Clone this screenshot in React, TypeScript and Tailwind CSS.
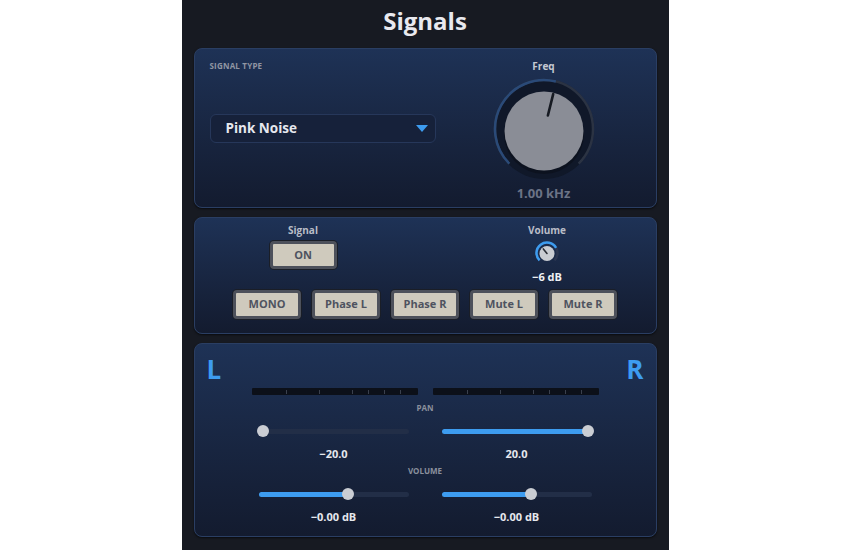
import React from "react";

const FONT = { fontFamily: '"Open Sans", "DejaVu Sans", sans-serif' };

// point on a circle, angle in degrees clockwise from 12 o'clock
function pt(cx: number, cy: number, r: number, a: number) {
  const rad = (a * Math.PI) / 180;
  return [cx + r * Math.sin(rad), cy - r * Math.cos(rad)];
}

function arc(cx: number, cy: number, r: number, a0: number, a1: number) {
  const [x0, y0] = pt(cx, cy, r, a0);
  const [x1, y1] = pt(cx, cy, r, a1);
  const large = a1 - a0 > 180 ? 1 : 0;
  return `M ${x0} ${y0} A ${r} ${r} 0 ${large} 1 ${x1} ${y1}`;
}

function Panel({ className, children }: { className?: string; children: React.ReactNode }) {
  return (
    <div
      className={
        "rounded-[8px] border border-[#2a3e63] bg-gradient-to-b from-[#1e3256] to-[#131b2f] shadow-[0_1px_2px_rgba(0,0,0,0.6)] " +
        (className ?? "")
      }
    >
      {children}
    </div>
  );
}

function FreqKnob() {
  const [p0x, p0y] = pt(55, 57, 16, 14);
  const [p1x, p1y] = pt(55, 57, 38, 14);
  return (
    <svg width="110" height="110" viewBox="0 0 110 110">
      <circle cx="55" cy="55" r="50" fill="#101829" />
      <path d={arc(55, 55, 49, -135, 135)} stroke="#2b3343" strokeWidth="2.5" fill="none" />
      <path d={arc(55, 55, 49, -135, 14)} stroke="#2a4a78" strokeWidth="2.5" fill="none" />
      <circle cx="55" cy="60" r="40" fill="#0b101b" opacity="0.7" />
      <circle cx="55" cy="57" r="39.5" fill="#8a8d96" />
      <line x1={p0x} y1={p0y} x2={p1x} y2={p1y} stroke="#161a22" strokeWidth="2.6" strokeLinecap="round" />
    </svg>
  );
}

function VolKnob() {
  const [px, py] = pt(13, 13, 5.5, -42);
  return (
    <svg width="26" height="26" viewBox="0 0 26 26">
      <path d={arc(13, 13, 10.5, -135, 135)} stroke="#2a3550" strokeWidth="2.5" fill="none" />
      <path d={arc(13, 13, 10.5, -135, 60)} stroke="#3d9cf0" strokeWidth="2.5" fill="none" />
      <circle cx="13" cy="13.5" r="7.5" fill="#c9ccd2" />
      <line x1="13" y1="13.5" x2={px} y2={py} stroke="#2a2e36" strokeWidth="1.6" strokeLinecap="round" />
    </svg>
  );
}

function Btn({ label, className }: { label: string; className?: string }) {
  return (
    <div
      className={
        "flex items-center justify-center rounded-[4px] border-[3px] border-[#4d515b] bg-[#cfcabd] shadow-[0_0_0_1px_#1a1e27] text-[11px] font-bold text-[#4e5360] " +
        (className ?? "")
      }
    >
      {label}
    </div>
  );
}

function Meter() {
  const ticks = [34, 67, 100, 116, 132, 148];
  return (
    <div className="relative w-[166px] h-[7px] bg-[#0c1019] rounded-[1px]">
      {ticks.map((t) => (
        <div key={t} className="absolute top-[2px] w-px h-[4px] bg-[#3a404d]" style={{ left: t }} />
      ))}
    </div>
  );
}

function Slider({ pct }: { pct: number }) {
  return (
    <div className="relative w-[150px] h-[14px] flex items-center">
      <div className="w-full h-[5px] rounded-full bg-[#222e47]" />
      <div
        className="absolute left-0 top-[4.5px] h-[5px] rounded-full bg-[#3d9cf0]"
        style={{ width: `${pct}%` }}
      />
      <div
        className="absolute top-[1px] w-[12px] h-[12px] -ml-[6px] rounded-full bg-[#cacdd3]"
        style={{ left: `calc(${pct}% ${pct > 50 ? "- 4px" : "+ 4px"})` }}
      />
    </div>
  );
}

export default function App() {
  return (
    <div style={FONT} className="mx-auto w-[487px] h-[550px] bg-[#171a22] flex flex-col px-[12px]">
      <div className="h-[48px] flex justify-center pt-[5px]">
        <span className="text-[24px] leading-[32px] font-bold text-[#e9e9ef]">Signals</span>
      </div>

      <Panel className="h-[160px] flex">
        <div className="pl-[15px] pt-[12px] flex flex-col">
          <div className="text-[8px] leading-[10px] font-bold text-[#9096a3] tracking-[0.2px]">SIGNAL TYPE</div>
          <div className="mt-[43px] w-[226px] h-[29px] rounded-[6px] border border-[#26375a] bg-[#16213a] flex items-center pl-[15px] pr-[7px]">
            <span className="flex-1 text-[13.5px] font-bold text-[#e6e8ee]">Pink Noise</span>
            <svg width="12" height="7" viewBox="0 0 12 7">
              <path d="M0 0 H12 L6 7 Z" fill="#3d9cf0" />
            </svg>
          </div>
        </div>
        <div className="ml-[43px] w-[130px] pt-[11px] flex flex-col items-center">
          <div className="text-[10px] leading-[12px] font-bold text-[#c5c9d2]">Freq</div>
          <div className="mt-[2px]">
            <FreqKnob />
          </div>
          <div className="mt-[1px] text-[13px] leading-[16px] font-bold text-[#6b7386]">1.00 kHz</div>
        </div>
      </Panel>

      <Panel className="mt-[9px] h-[117px] flex flex-col items-center pt-[6px]">
        <div className="flex gap-[124px]">
          <div className="w-[120px] flex flex-col items-center">
            <div className="text-[10px] leading-[12px] font-bold text-[#b9bdc7]">Signal</div>
            <Btn label="ON" className="mt-[5px] w-[67px] h-[28px]" />
          </div>
          <div className="w-[120px] flex flex-col items-center">
            <div className="text-[10px] leading-[12px] font-bold text-[#b9bdc7]">Volume</div>
            <div className="mt-[4px]">
              <VolKnob />
            </div>
            <div className="mt-[4px] text-[11px] leading-[14px] font-bold text-[#eef0f4]">−6 dB</div>
          </div>
        </div>
        <div className="mt-[6px] flex gap-[11px]">
          {["MONO", "Phase L", "Phase R", "Mute L", "Mute R"].map((l) => (
            <Btn key={l} label={l} className="w-[68px] h-[29px]" />
          ))}
        </div>
      </Panel>

      <Panel className="mt-[9px] h-[194px] flex flex-col items-center pt-[11px] px-[12px]">
        <div className="w-full flex justify-between">
          <span className="text-[26px] leading-[28px] font-bold text-[#3d9cf0]">L</span>
          <span className="text-[26px] leading-[28px] font-bold text-[#3d9cf0]">R</span>
        </div>
        <div className="mt-[5px] flex gap-[15px]">
          <Meter />
          <Meter />
        </div>
        <div className="mt-[8px] text-[8px] leading-[10px] font-bold text-[#8a909c]">PAN</div>
        <div className="mt-[11px] flex gap-[33px]">
          <Slider pct={0} />
          <Slider pct={100} />
        </div>
        <div className="mt-[9px] flex gap-[33px]">
          <div className="w-[150px] text-center text-[11px] leading-[14px] font-bold text-[#e6e8ee]">−20.0</div>
          <div className="w-[150px] text-center text-[11px] leading-[14px] font-bold text-[#e6e8ee]">20.0</div>
        </div>
        <div className="mt-[5px] text-[8px] leading-[10px] font-bold text-[#8a909c]">VOLUME</div>
        <div className="mt-[11px] flex gap-[33px]">
          <Slider pct={62} />
          <Slider pct={62} />
        </div>
        <div className="mt-[9px] flex gap-[33px]">
          <div className="w-[150px] text-center text-[11px] leading-[14px] font-bold text-[#e6e8ee]">−0.00 dB</div>
          <div className="w-[150px] text-center text-[11px] leading-[14px] font-bold text-[#e6e8ee]">−0.00 dB</div>
        </div>
      </Panel>
    </div>
  );
}
